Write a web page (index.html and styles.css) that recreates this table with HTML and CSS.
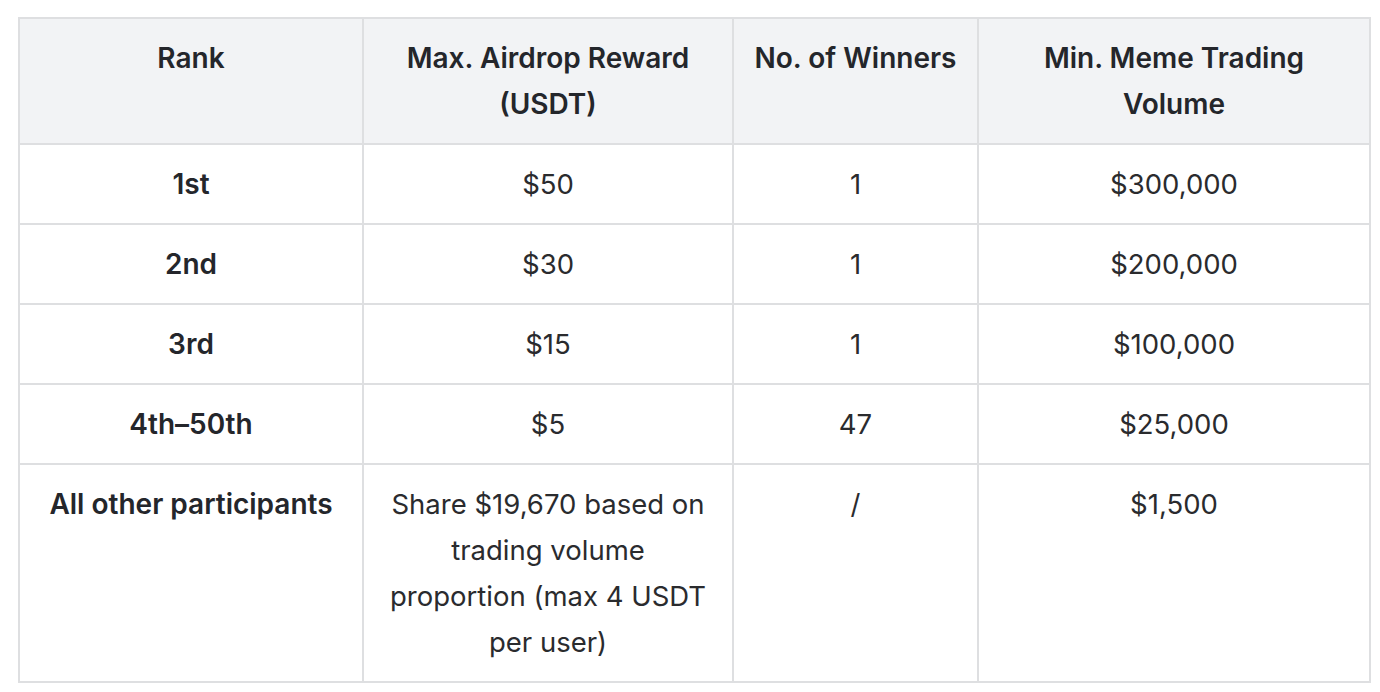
FILE: index.html
```html
<!DOCTYPE html>
<html lang="en">
<head>
<meta charset="utf-8">
<title>Airdrop Rewards</title>
<link rel="stylesheet" href="styles.css">
</head>
<body>
<table class="rewards">
  <colgroup>
    <col class="c-rank">
    <col class="c-reward">
    <col class="c-winners">
    <col class="c-volume">
  </colgroup>
  <thead>
    <tr>
      <th>Rank</th>
      <th>Max. Airdrop Reward<br>(USDT)</th>
      <th>No. of Winners</th>
      <th>Min. Meme Trading<br>Volume</th>
    </tr>
  </thead>
  <tbody>
    <tr><td class="rank">1st</td><td>$50</td><td>1</td><td>$300,000</td></tr>
    <tr><td class="rank">2nd</td><td>$30</td><td>1</td><td>$200,000</td></tr>
    <tr><td class="rank">3rd</td><td>$15</td><td>1</td><td>$100,000</td></tr>
    <tr><td class="rank">4th–50th</td><td>$5</td><td>47</td><td>$25,000</td></tr>
    <tr><td class="rank">All other participants</td><td>Share $19,670 based on trading volume proportion (max 4 USDT per user)</td><td>/</td><td>$1,500</td></tr>
  </tbody>
</table>
</body>
</html>
```

FILE: styles.css
```css
html, body {
  margin: 0;
  padding: 0;
  background: #ffffff;
}

body {
  font-family: Inter, "Noto Sans", "Liberation Sans", sans-serif;
  color: #2a2b2e;
}

.rewards {
  margin: 17px 0 0 18px;
  width: 1351px;
  table-layout: fixed;
  border-collapse: collapse;
  font-size: 28px;
  line-height: 46px;
}

.c-rank { width: 344px; }
.c-reward { width: 370px; }
.c-winners { width: 245px; }
.c-volume { width: 392px; }

.rewards th,
.rewards td {
  border: 2px solid #dedfe1;
  padding: 16px 16px;
  text-align: center;
  vertical-align: top;
}

.rewards th {
  background: #f2f3f5;
  font-weight: 600;
  color: #24262b;
}

.rewards td {
  font-weight: 400;
  font-size: 27.5px;
}

.rewards td.rank {
  font-size: 28px;
  font-weight: 600;
  color: #24262b;
}
```
